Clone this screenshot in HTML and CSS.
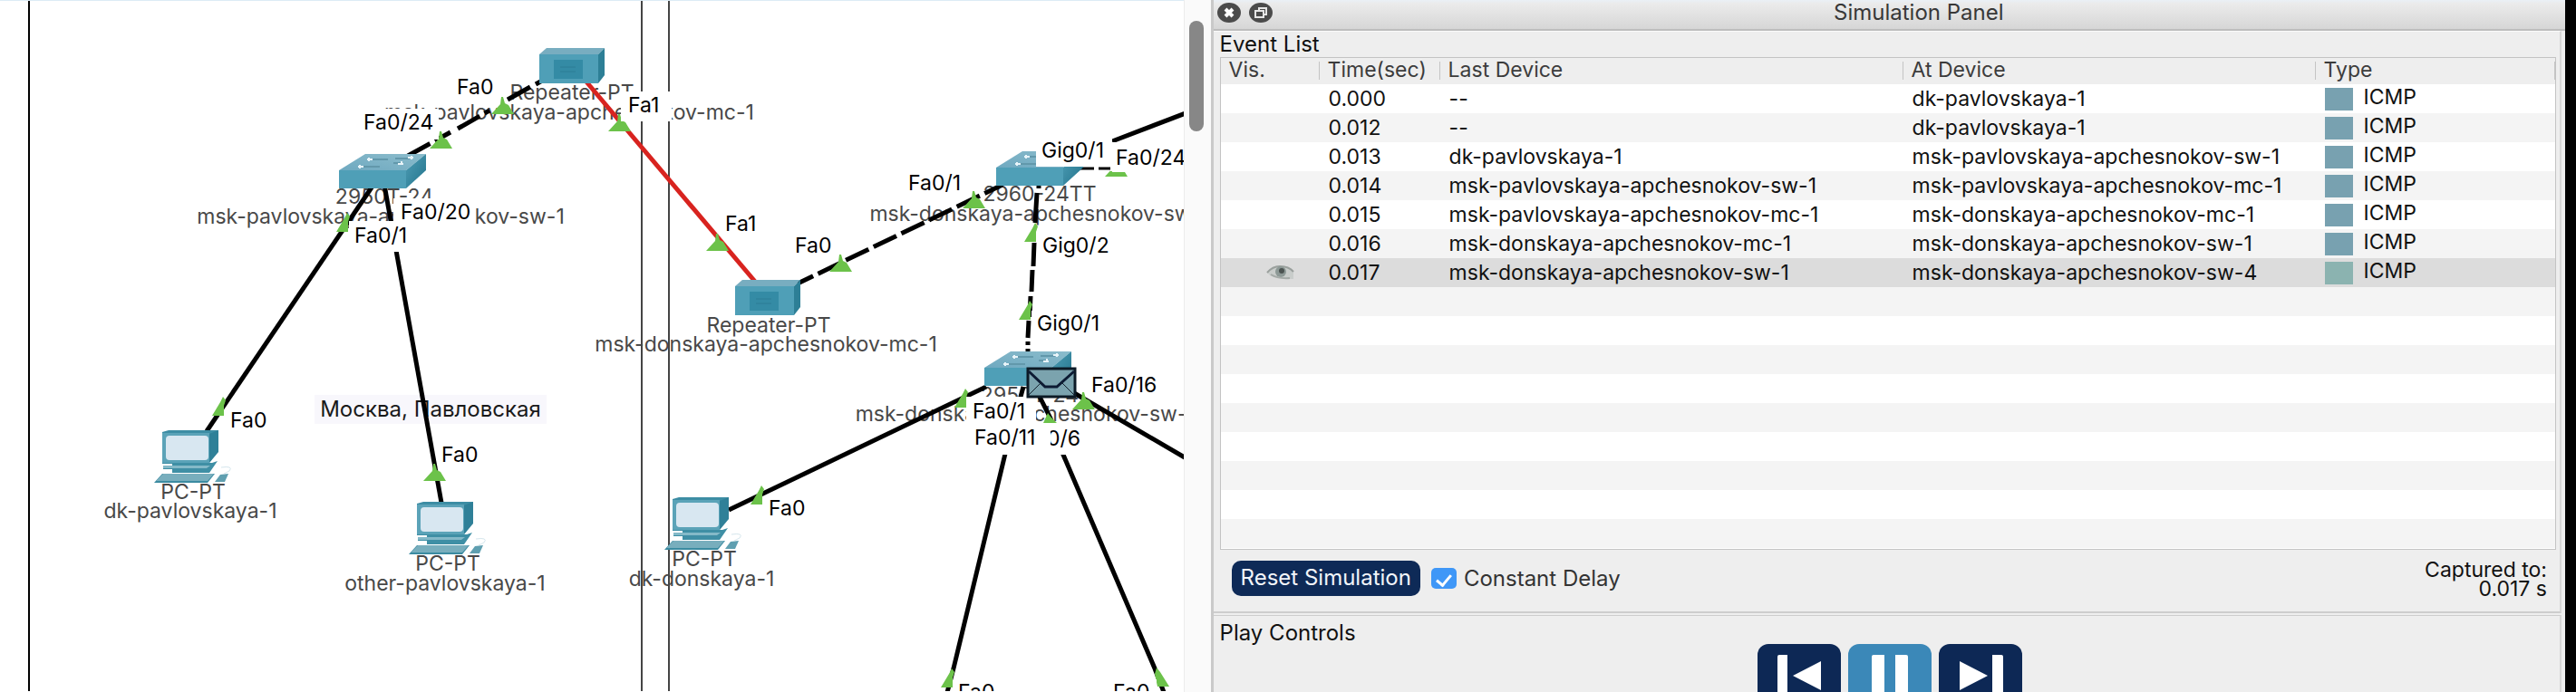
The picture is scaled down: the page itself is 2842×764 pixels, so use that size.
FILE: index.html
```html
<!DOCTYPE html>
<html lang="en">
<head>
<meta charset="utf-8">
<title>Simulation Panel</title>
<link rel="stylesheet" href="styles.css">
</head>
<body>
<main class="workspace" aria-label="Logical workspace">
  <svg class="topology" role="img" aria-label="Network topology">
    <defs>
      <linearGradient id="top" x1="0" y1="1" x2="1" y2="0"><stop offset="0" stop-color="#6fa9c0"/><stop offset="1" stop-color="#8bbccc"/></linearGradient>
      <linearGradient id="side" x1="0" y1="0" x2="1" y2="1"><stop offset="0" stop-color="#4f9db5"/><stop offset="1" stop-color="#22748c"/></linearGradient>
      <g id="up"><path d="M-12 9 L-2 -2 L-1 -10 L1 -10 L3 -3 L7 -1 L13 9Z"/></g>
      <g id="up-left"><path d="M-12 11 L-3 -4 L0 -10 L3 -6 L1 0 L1 11Z"/></g>
      <g id="switch">
        <path d="M0 18 L29 0 H96 L74 18Z" fill="url(#top)"/>
        <path d="M0 18 H74 V38 H0Z" fill="#4f9fb7"/>
        <path d="M74 18 L96 0 V18 L74 38Z" fill="url(#side)"/>
        <path d="M37 6 H54 M25 14 H45 M60 10 H70 M62 5 H78" stroke="#6298ab" stroke-width="2"/>
        <path d="M31 6 h6 M33 4 v4 M21 14 h6 M23 12 v4 M65 11 h6 M69 8 v4 M76 4 h6 M80 2 v4" stroke="#e8f4f9" stroke-width="2"/>
      </g>
      <g id="repeater">
        <path d="M0 7 L8 0 H72 L65 7Z" fill="#78adc0"/>
        <path d="M0 7 H65 V39 H0Z" fill="#4f9fb7"/>
        <path d="M65 7 L72 0 V30 L65 39Z" fill="#2d7f96"/>
        <path d="M16 13 H48 V34 H16Z" fill="#348ba5"/>
        <path d="M23 21 H40 M23 26 H40" stroke="#2d7d95"/>
      </g>
      <g id="pc">
        <path d="M9 2 L16 0 H71 V22 L60 37 H9Z" fill="#3d8da4"/>
        <path d="M9 3 H61 V36 H9Z" fill="#5ba3b8"/>
        <rect x="13" y="6" width="47" height="27" rx="4" fill="#d8e7f1"/>
        <path d="M61 4 L71 0 V24 L61 36Z" fill="#2f8098"/>
        <path d="M20 36 H64 L70 34 L61 47 H20 V43 H10 V40 H20Z" fill="#3f8fa5"/>
        <path d="M10 39 H62 L58 42 H10Z" fill="#84b9c8"/>
        <path d="M9 48 H67 L59 58 H0Z" fill="#3b8ba1"/>
        <path d="M10 48 H66 L59 56 H2Z" fill="#78aebd"/>
        <path d="M73 49 L82 48 L78 57 H67Z" fill="#5f9fb0"/>
        <path d="M74 41 Q88 39 83 45 L77 48" fill="none" stroke="#d5e6ed" stroke-width="1"/>
      </g>
    </defs>

    <g class="frame">
      <path class="frame-outer" d="M32 0 V2000"/>
      <path d="M708 0 V2000 M738 0 V2000"/>
    </g>

    <g class="note">
      <rect x="347" y="436" width="256" height="32"/>
      <text x="475" y="460">Москва, Павловская</text>
    </g>

    <g class="device-names">
      <text x="631" y="110">Repeater-PT</text>
      <text x="628" y="132">msk-pavlovskaya-apchesnokov-mc-1</text>
      <text x="424" y="225">2950T-24</text>
      <text x="420" y="247">msk-pavlovskaya-apchesnokov-sw-1</text>
      <text x="1147" y="222">2960-24TT</text>
      <text x="1147" y="244">msk-donskaya-apchesnokov-sw-1</text>
      <text x="848" y="367">Repeater-PT</text>
      <text x="845" y="388">msk-donskaya-apchesnokov-mc-1</text>
      <text x="1136" y="444">2950T-24</text>
      <text x="1134" y="465">msk-donskaya-apchesnokov-sw-4</text>
      <text x="213" y="551">PC-PT</text>
      <text x="210" y="572">dk-pavlovskaya-1</text>
      <text x="494" y="630">PC-PT</text>
      <text x="491" y="652">other-pavlovskaya-1</text>
      <text x="777" y="625">PC-PT</text>
      <text x="774" y="647">dk-donskaya-1</text>
    </g>

    <g class="links">
      <path d="M412 204 L228 476"/>
      <path d="M424 204 L487 555"/>
      <path d="M1088 427 L804 563"/>
      <path d="M1129 427 L1109 501 L1052 738 L1043 772"/>
      <path d="M1144 432 L1159 462 L1173 502 L1274 738 L1287 772"/>
      <path d="M1180 431 L1307 505 L1347 529"/>
      <path d="M1227 156 L1347 110"/>
      <path class="dash" d="M450 172 L497 146 M505 142 L540 122"/>
      <path d="M560 110 L585 96 M591 93 L600 88"/>
      <path class="dash" stroke-dashoffset="9" d="M880 313 L1106 204"/>
      <path d="M1146 204 V208 M1144 213 L1142 246 M1141 268 L1140 294 M1139 298 L1138 322 M1137 327 L1136 350 M1135 354 L1134 373 M1134 377 V381 M1134 385 V390"/>
      <path class="thin" d="M1188 186 H1207 M1212 186 H1226"/>
      <path class="fail" d="M645 88 L834 312"/>
    </g>

    <g class="devices">
      <use href="#switch" x="374" y="170"/>
      <use href="#switch" x="1099" y="167"/>
      <use href="#switch" x="1086" y="388"/>
      <use href="#repeater" x="595" y="53"/>
      <use href="#repeater" x="811" y="309"/>
      <use href="#pc" x="170" y="475"/>
      <use href="#pc" x="451" y="554"/>
      <use href="#pc" x="733" y="549"/>
    </g>

    <g class="status">
      <use href="#up" x="554" y="117"/>
      <use href="#up" x="486" y="155"/>
      <use href="#up" x="683" y="136"/>
      <use href="#up" x="791" y="268"/>
      <use href="#up" x="927" y="291"/>
      <use href="#up" x="1074" y="221"/>
      <use href="#up" x="1231" y="186"/>
      <use href="#up" x="479" y="522"/>
      <use href="#up" x="1195" y="443"/>
      <path d="M1156 456 L1159 460 L1166 467 H1151Z"/>
      <use href="#up-left" x="383" y="245"/>
      <use href="#up-left" x="1142" y="256"/>
      <use href="#up-left" x="1136" y="342"/>
      <use href="#up-left" x="246" y="448"/>
      <use href="#up-left" x="1065" y="439"/>
      <use href="#up-left" x="840" y="546"/>
      <use href="#up-left" x="1050" y="748"/>
      <path d="M1276 737 L1280 742 L1290 758 H1277 L1274 744Z"/>
    </g>

    <g class="label-boxes">
      <rect x="395" y="120" width="89" height="34"/>
      <rect x="434" y="219" width="90" height="35"/>
      <rect x="385" y="244" width="75" height="34"/>
      <rect x="685" y="101" width="56" height="33"/>
      <rect x="1143" y="150" width="84" height="34"/>
      <rect x="1225" y="157" width="90" height="32"/>
      <rect x="1216" y="175" width="34" height="9"/>
      <rect x="1227" y="184" width="23" height="6"/>
      <rect x="1147" y="257" width="84" height="32"/>
      <rect x="1138" y="343" width="84" height="32"/>
      <rect x="1066" y="438" width="77" height="34"/>
      <rect x="1122" y="467" width="73" height="35"/>
      <rect x="1058" y="750" width="60" height="34"/>
      <rect x="1222" y="750" width="54" height="34"/>
    </g>

    <g class="ports">
      <text x="504" y="104">Fa0</text>
      <text x="401" y="143">Fa0/24</text>
      <text x="442" y="242">Fa0/20</text>
      <text x="391" y="268">Fa0/1</text>
      <text x="693" y="124">Fa1</text>
      <text x="800" y="255">Fa1</text>
      <text x="877" y="279">Fa0</text>
      <text x="1002" y="210">Fa0/1</text>
      <text x="1149" y="174">Gig0/1</text>
      <text x="1231" y="182">Fa0/24</text>
      <text x="1150" y="279">Gig0/2</text>
      <text x="1144" y="365">Gig0/1</text>
      <text x="1204" y="433">Fa0/16</text>
      <text x="1073" y="462">Fa0/1</text>
      <text x="1129" y="492">Fa0/6</text>
      <text x="254" y="472">Fa0</text>
      <text x="487" y="510">Fa0</text>
      <text x="848" y="569">Fa0</text>
      <text x="1057" y="772">Fa0</text>
      <text x="1228" y="772">Fa0</text>
    </g>
    <g class="label-boxes"><rect x="1068" y="470" width="91" height="32"/></g>
    <g class="ports"><text x="1075" y="491">Fa0/11</text></g>

    <g class="envelope">
      <rect x="1134" y="407" width="52" height="31"/>
      <path class="flap" d="M1135 410 L1153 427 H1166 L1185 410"/>
      <path d="M1135 436 L1149 422 M1185 436 L1171 422"/>
    </g>
  </svg>
</main>

<div class="scroll-lane"><div class="thumb"></div></div>

<aside class="panel">
  <header class="title-bar">
    <button class="round" type="button" aria-label="Close"><svg viewBox="0 0 28 22"><ellipse cx="14" cy="11" rx="13" ry="11"/><path class="cross" d="M10 7 L18 15 M18 7 L10 15"/></svg></button>
    <button class="round" type="button" aria-label="Undock"><svg viewBox="0 0 28 22"><ellipse cx="14" cy="11" rx="13" ry="11"/><path class="win" d="M12 9 V6 H20 V13 H17 M8 9 H17 V16 H8Z"/></svg></button>
    <h1>Simulation Panel</h1>
  </header>

  <section class="events">
    <h2>Event List</h2>
    <div class="grid">
      <table>
        <colgroup><col class="c-vis"><col class="c-time"><col class="c-last"><col class="c-at"><col></colgroup>
        <thead><tr><th>Vis.</th><th>Time(sec)</th><th>Last Device</th><th>At Device</th><th>Type</th></tr></thead>
        <tbody>
          <tr><td></td><td>0.000</td><td>--</td><td>dk-pavlovskaya-1</td><td><i class="swatch"></i>ICMP</td></tr>
          <tr><td></td><td>0.012</td><td>--</td><td>dk-pavlovskaya-1</td><td><i class="swatch"></i>ICMP</td></tr>
          <tr><td></td><td>0.013</td><td>dk-pavlovskaya-1</td><td>msk-pavlovskaya-apchesnokov-sw-1</td><td><i class="swatch"></i>ICMP</td></tr>
          <tr><td></td><td>0.014</td><td>msk-pavlovskaya-apchesnokov-sw-1</td><td>msk-pavlovskaya-apchesnokov-mc-1</td><td><i class="swatch"></i>ICMP</td></tr>
          <tr><td></td><td>0.015</td><td>msk-pavlovskaya-apchesnokov-mc-1</td><td>msk-donskaya-apchesnokov-mc-1</td><td><i class="swatch"></i>ICMP</td></tr>
          <tr><td></td><td>0.016</td><td>msk-donskaya-apchesnokov-mc-1</td><td>msk-donskaya-apchesnokov-sw-1</td><td><i class="swatch"></i>ICMP</td></tr>
          <tr class="selected"><td class="eye"><svg viewBox="0 0 32 17" aria-label="Visible"><path d="M1 9 Q6 1 15 1 Q26 1 30 9 V16 H20 Q5 15 1 9Z" fill="#c9cdcb"/><path d="M1 9 Q7 2 15 2 Q25 2 30 8" fill="none" stroke="#9aa09d" stroke-width="2"/><circle cx="16" cy="8" r="6" fill="#8d9996"/><circle cx="17" cy="7" r="3" fill="#4b5351"/><path d="M5 11 Q13 16 26 15" fill="none" stroke="#a4aaa7" stroke-width="2"/></svg></td><td>0.017</td><td>msk-donskaya-apchesnokov-sw-1</td><td>msk-donskaya-apchesnokov-sw-4</td><td><i class="swatch current"></i>ICMP</td></tr>
        </tbody>
      </table>
    </div>
    <div class="options">
      <button class="reset" type="button">Reset Simulation</button>
      <label class="delay"><input type="checkbox" checked>Constant Delay</label>
      <p class="captured">Captured to:<br>0.017 s</p>
    </div>
  </section>

  <section class="play">
    <h2>Play Controls</h2>
    <div class="buttons">
      <button type="button" aria-label="Step back"><svg viewBox="0 0 92 72"><path d="M22 14 q0 -2 2 -2 h9 v46 h-11Z M39 35 L70 19 V51Z"/></svg></button>
      <button type="button" class="active" aria-label="Pause"><svg viewBox="0 0 92 72"><path d="M26 14 q0 -2 2 -2 h12 v46 h-14Z M52 12 h12 q2 0 2 2 v44 h-14Z"/></svg></button>
      <button type="button" aria-label="Step forward"><svg viewBox="0 0 92 72"><path d="M23 19 L54 35 L23 51Z M59 12 h10 q2 0 2 2 v44 h-12Z"/></svg></button>
    </div>
  </section>
</aside>
<div class="edge"></div>
</body>
</html>
```
FILE: styles.css
```css
* { box-sizing: border-box; }

body {
  margin: 0;
  height: 100vh;
  display: flex;
  overflow: hidden;
  background: #fff;
  color: #111;
  font: 23px/22px Inter, "Liberation Sans", sans-serif;
}

h1, h2, p { margin: 0; font-size: 23px; font-weight: 400; }
h1, h2 { font-size: 24px; }
button { border: 0; padding: 0; font: inherit; }

/* Workspace */
.workspace { flex: 1307 1 0; min-width: 0; overflow: hidden; border-top: 1px solid #dcebf5; }
.topology { display: block; width: 100%; height: 100%; margin-top: -1px; }
.frame path { fill: none; stroke: #444; stroke-width: 2; }
.frame .frame-outer { stroke: #000; }
.note rect { fill: #f8f7fc; }
.note text { fill: #1a1a1a; text-anchor: middle; font-size: 24px; }
.device-names text { fill: #484848; text-anchor: middle; }
.links path { fill: none; stroke: #000; stroke-width: 5; }
.links .dash { stroke-dasharray: 28 6; }
.links .thin { stroke-width: 3; }
.links .fail { stroke: #d8231f; }
.status { fill: #6cc24a; }
.label-boxes { fill: #fff; }
.ports { fill: #000; }
.envelope rect { fill: #7ba3ae; stroke: #0c1a26; stroke-width: 3; }
.envelope path { fill: none; stroke: #14222e; stroke-width: 1; }
.envelope .flap { stroke: #0c1a33; stroke-width: 3; }

.scroll-lane { flex: none; width: 30px; background: #fafafa; border-left: 1px solid #ececec; padding: 23px 8px 0 5px; }
.thumb { width: 16px; height: 122px; border-radius: 8px; background: #878787; }

/* Panel */
.panel {
  flex: 1493 1 0;
  min-width: 0;
  display: flex;
  flex-direction: column;
  background: #eee;
  border-left: 3px solid #c9c9c9;
}
.edge { flex: none; width: 12px; background: #000; }

.title-bar {
  flex: none;
  height: 34px;
  display: flex;
  align-items: center;
  gap: 7px;
  padding: 0 8px 4px 3px;
  background: linear-gradient(#eaf0f6, #ebebeb 4px, #d6d6d6);
  border-bottom: 2px solid #bdbdbd;
}
.title-bar h1 { flex: 1; text-align: center; color: #383838; }
.round { width: 28px; height: 22px; background: none; }
.round svg { display: block; width: 28px; height: 22px; }
.round ellipse { fill: #4b4b4b; }
.round .cross { fill: none; stroke: #fff; stroke-width: 4; }
.round .win { fill: none; stroke: #e6e6e6; stroke-width: 2; }

.events {
  flex: 1;
  min-height: 0;
  display: flex;
  flex-direction: column;
  margin-right: 4px;
  padding: 2px 4px 0 7px;
  border-top: 1px solid #fafafa;
  border-right: 2px solid #d6d6d6;
  border-bottom: 2px solid #cdcdcd;
}
.events h2 { height: 26px; line-height: 24px; }

.grid {
  flex: 1;
  min-height: 0;
  overflow: hidden;
  border: 1px solid #c3c3c3;
  background: repeating-linear-gradient(#fff 0 32px, #f4f4f4 32px 64px) 0 29px;
}
table { width: 100%; table-layout: fixed; border-collapse: collapse; }
.c-vis { width: 109px; }
.c-time { width: 133px; }
.c-last { width: 511px; }
.c-at { width: 455px; }
th {
  height: 29px;
  padding: 0 0 4px 9px;
  text-align: left;
  font-weight: 400;
  color: #3c3c3c;
  background: linear-gradient(#c4c4c4, #c4c4c4) right 4px / 1px 20px no-repeat #eee;
}
td { height: 32px; padding: 0 0 1px 10px; white-space: nowrap; }
.selected td { background: #dcdcdc; }
.eye { padding-left: 50px; }
.eye svg { display: block; width: 32px; height: 17px; }
.swatch { display: inline-block; width: 31px; height: 25px; margin-right: 12px; vertical-align: middle; background: #78a1b0; }
.swatch.current { background: #8bb3b0; }
td:has(.swatch) { padding-bottom: 0; }

.options { flex: none; height: 68px; display: flex; align-items: flex-start; padding: 12px 10px 0 13px; }
.reset {
  height: 39px;
  padding: 0 10px 2px;
  border-radius: 10px;
  background: #0e2a57;
  color: #f2f5fa;
  font-size: 24px;
}
.delay { display: flex; align-items: center; gap: 8px; height: 39px; margin-left: 12px; color: #333; font-size: 24px; }
.delay input {
  appearance: none;
  width: 28px;
  height: 23px;
  margin: 0;
  border-radius: 5px;
  background: #3f97f7;
  display: grid;
  place-items: center;
}
.delay input::before {
  content: "";
  width: 7px;
  height: 13px;
  border: solid #fff;
  border-width: 0 3px 3px 0;
  transform: rotate(40deg);
}
.captured { margin-left: auto; text-align: right; line-height: 21px; }

.play { flex: none; height: 85px; margin-top: 2px; border-top: 1px solid #cdcdcd; margin-right: 4px; padding: 8px 0 0 7px; border-right: 2px solid #d6d6d6; overflow: hidden; }
.play h2 { padding-bottom: 1px; }
.buttons { display: flex; justify-content: center; gap: 8px; }
.buttons button { flex: none; width: 92px; height: 72px; border-radius: 12px; background: #0d2855; }
.buttons .active { background: #3b88b8; }
.buttons svg { display: block; width: 92px; height: 72px; fill: #fff; }
```
